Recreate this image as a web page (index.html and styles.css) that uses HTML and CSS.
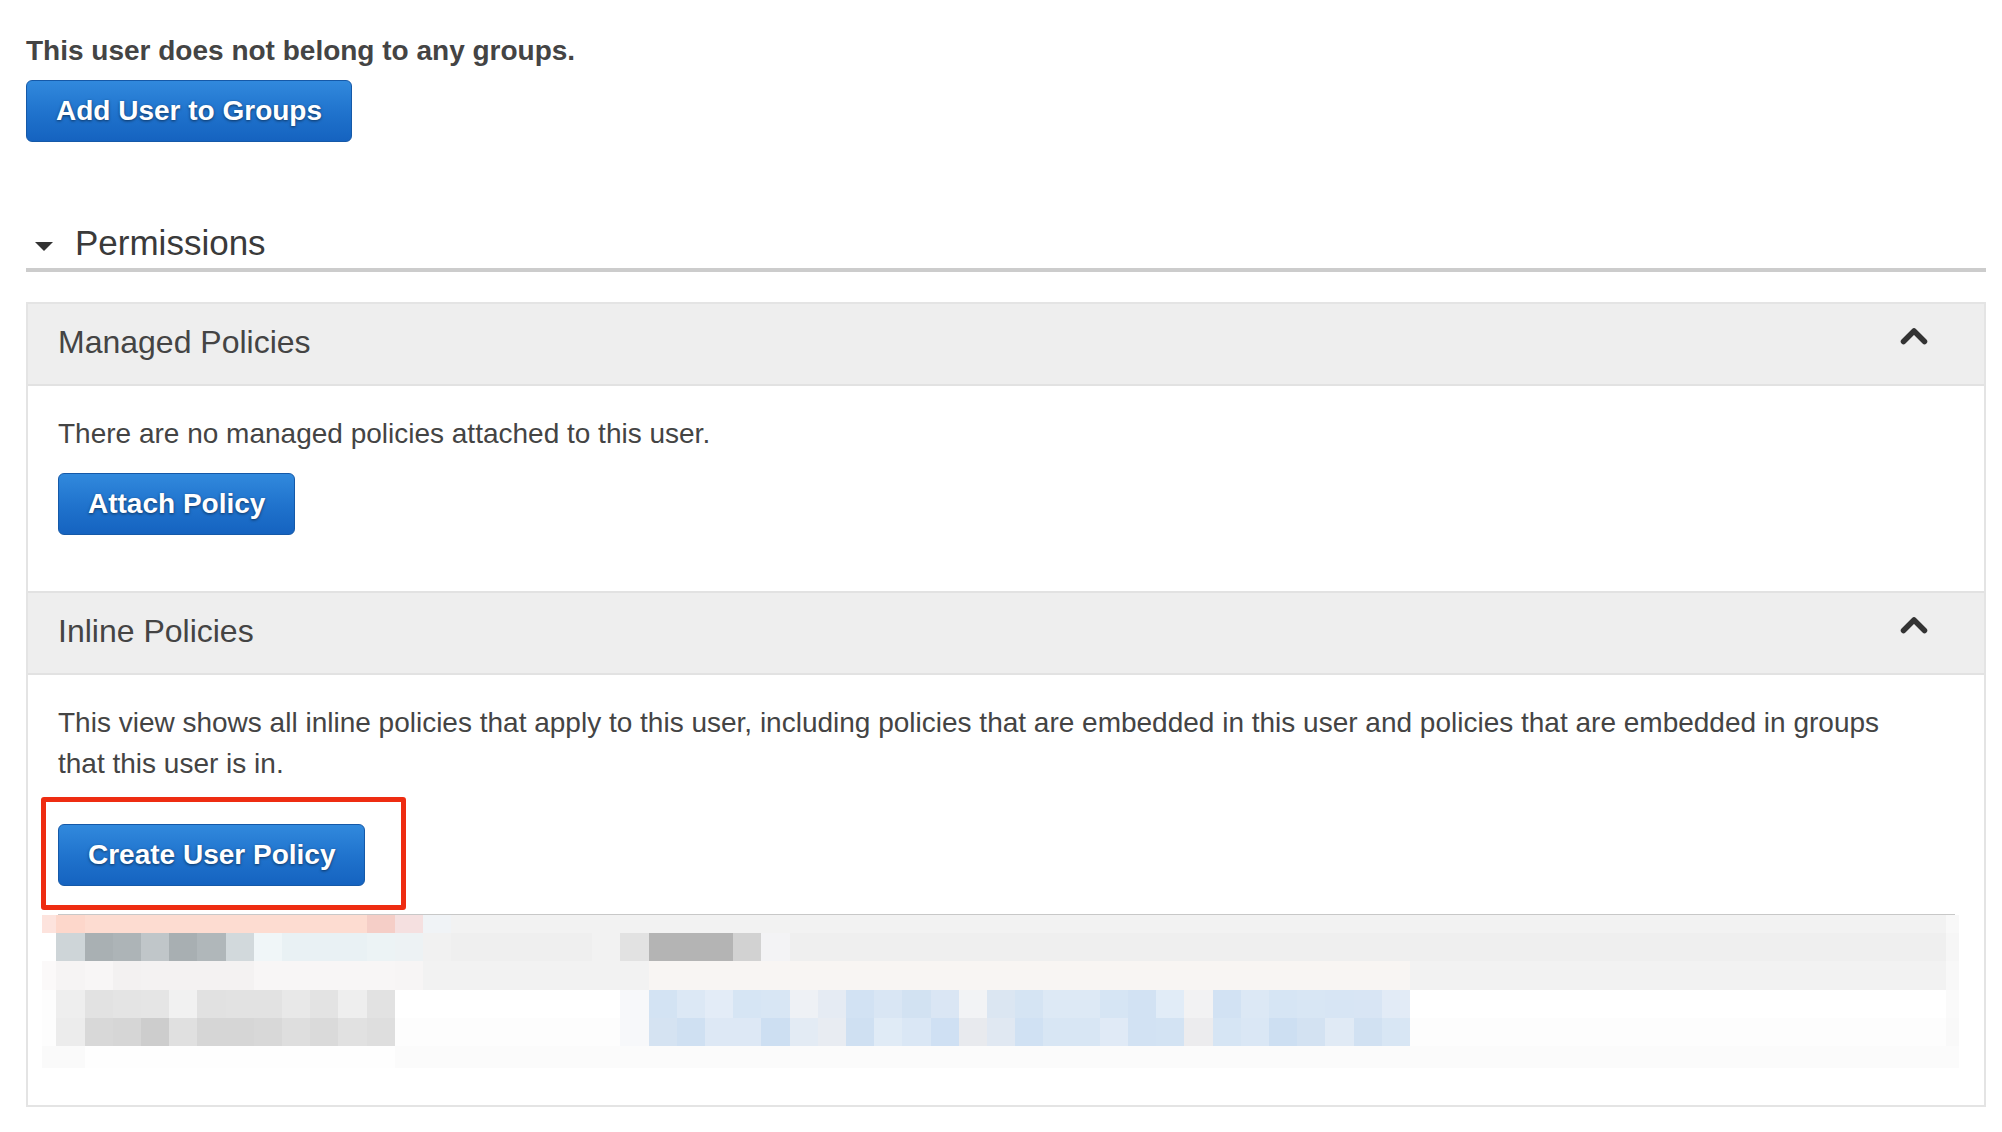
FILE: index.html
```html
<!DOCTYPE html>
<html lang="en">
<head>
<meta charset="utf-8">
<title>User permissions</title>
<link rel="stylesheet" href="styles.css">
</head>
<body>
<div class="page">
  <p class="groups-msg">This user does not belong to any groups.</p>
  <button class="btn groups-btn" type="button">Add User to Groups</button>

  <div class="perm-head">
    <svg class="caret" width="18" height="9" viewBox="0 0 18 9"><path d="M0 0H18L9 9Z" fill="#333"/></svg>
    <h2 class="perm-title">Permissions</h2>
  </div>

  <div class="panel">
    <div class="sec-head">
      <h3 class="sec-title">Managed Policies</h3>
      <svg class="chevron" width="28" height="18" viewBox="0 0 28 18"><polyline points="3.5,14.5 14,4 24.5,14.5" fill="none" stroke="#333" stroke-width="5.5" stroke-linecap="round" stroke-linejoin="round"/></svg>
    </div>
    <div class="sec-body">
      <p>There are no managed policies attached to this user.</p>
      <button class="btn attach" type="button">Attach Policy</button>
    </div>

    <div class="sec-head">
      <h3 class="sec-title">Inline Policies</h3>
      <svg class="chevron" width="28" height="18" viewBox="0 0 28 18"><polyline points="3.5,14.5 14,4 24.5,14.5" fill="none" stroke="#333" stroke-width="5.5" stroke-linecap="round" stroke-linejoin="round"/></svg>
    </div>
    <div class="sec-body last">
      <p class="inline-desc">This view shows all inline policies that apply to this user, including policies that are embedded in this user and policies that are embedded in groups that this user is in.</p>
      <div class="highlight">
        <button class="btn" type="button">Create User Policy</button>
      </div>
      <div class="tbl">
        <div class="tbl-rule"></div>
        <div class="mrow r1"></div>
        <div class="mrow r2"></div>
        <div class="mrow r3"></div>
        <div class="mrow r4"></div>
        <div class="mrow r5"></div>
        <div class="mrow r6"></div>
      </div>
    </div>
  </div>
</div>
</body>
</html>
```
FILE: styles.css
```css
html, body {
  margin: 0;
  background: #fff;
}

body {
  font-family: "Liberation Sans", Arial, Helvetica, sans-serif;
  color: #444;
}

.page {
  padding: 30px 16px 0 26px;
}

.groups-msg {
  margin: 0;
  font-size: 28px;
  line-height: 41px;
  font-weight: bold;
  color: #444;
}

.btn {
  display: inline-flex;
  align-items: center;
  box-sizing: border-box;
  height: 62px;
  padding: 0 29px;
  margin: 0;
  border: 1px solid #1559a8;
  border-radius: 6px;
  background: linear-gradient(#3189dd, #1f72cc 55%, #1563c0);
  color: #fff;
  font-family: "Liberation Sans", Arial, sans-serif;
  font-size: 28px;
  font-weight: bold;
  line-height: 1;
  text-shadow: 0 1px 3px rgba(0, 0, 0, 0.55);
  cursor: pointer;
}

.groups-btn {
  margin-top: 9px;
}

.perm-head {
  display: flex;
  align-items: center;
  margin-top: 77px;
  padding: 0 0 1px 9px;
  border-bottom: 4px solid #ccc;
}

.caret {
  margin: 6px 22px 0 0;
  flex: none;
}

.perm-title {
  margin: 0;
  font-size: 35px;
  line-height: 48px;
  font-weight: normal;
  color: #3a3a3a;
}

.panel {
  margin-top: 30px;
  border: 2px solid #e4e4e4;
}

.sec-head {
  display: flex;
  justify-content: space-between;
  align-items: flex-start;
  padding: 16px 30px 20px;
  background: #eee;
  border-bottom: 2px solid #e2e2e2;
}

.sec-title {
  margin: 0;
  font-size: 32px;
  line-height: 44px;
  font-weight: normal;
  color: #444;
}

.chevron {
  flex: none;
  margin: 7px 26px 0 0;
}

.sec-body {
  padding: 27px 30px 56px;
  border-bottom: 2px solid #e2e2e2;
}

.sec-body.last {
  padding-bottom: 37px;
  border-bottom: none;
}

.sec-body p {
  margin: 0;
  font-size: 28px;
  line-height: 41px;
  color: #444;
}

.inline-desc {
  max-width: 1870px;
}

.attach {
  margin-top: 19px;
}

.highlight {
  display: flex;
  width: fit-content;
  margin: 13px 0 0 -17px;
  padding: 22px 36px 19px 12px;
  border: 5px solid #ee2c11;
  border-radius: 3px;
}

.tbl {
  margin: 4px -30px 0;
}

.tbl-rule {
  height: 1px;
  margin: 0 29px 0 30px;
  background: #c8c8c8;
}

.mrow {
  width: 1931px;
}

.r1 {
  height: 18.3px;
  background: linear-gradient(to right,
    transparent 0 13.7px,
    #fde3dd 13.7px 28.4px,
    #fdd7cb 28.4px 56.6px,
    #fddcd1 56.6px 338.6px,
    #f5cec7 338.6px 366.8px,
    #f5e0e0 366.8px 395px,
    #f0f3f6 395px 423.2px,
    #f2f2f2 423.2px 1917.8px,
    #f8f8f8 1917.8px 1931px);
}

.r2 {
  height: 28.2px;
  background: linear-gradient(to right,
    #fff 0 28.4px,
    #ced5d8 28.4px 56.6px,
    #a9b0b3 56.6px 84.8px,
    #adb4b7 84.8px 113px,
    #c0c6c9 113px 141.2px,
    #a8afb2 141.2px 169.4px,
    #b0b7ba 169.4px 197.6px,
    #d2d9dc 197.6px 225.8px,
    #f0f6f8 225.8px 254px,
    #e9f1f4 254px 338.6px,
    #ecf3f5 338.6px 366.8px,
    #edf2f4 366.8px 395px,
    #f1f1f1 395px 423.2px,
    #efefef 423.2px 564.2px,
    #f2f2f2 564.2px 592.4px,
    #e2e2e2 592.4px 620.6px,
    #b4b4b4 620.6px 705.2px,
    #d2d2d2 705.2px 733.4px,
    #f3f3f5 733.4px 761.6px,
    #efefef 761.6px 1917.8px,
    #f6f6f6 1917.8px 1931px);
}

.r3 {
  height: 28.2px;
  background: linear-gradient(to right,
    #fff 0 13.7px,
    #fbf9f9 13.7px 28.4px,
    #f6f4f4 28.4px 56.6px,
    #f8f6f6 56.6px 84.8px,
    #f3f1f1 84.8px 113px,
    #f4f2f2 113px 225.8px,
    #f8f6f6 225.8px 366.8px,
    #f7f5f5 366.8px 395px,
    #f2f2f2 395px 620.6px,
    #f8f5f3 620.6px 1382px,
    #f2f2f2 1382px 1917.8px,
    #f8f8f8 1917.8px 1931px);
}

.r4 {
  height: 28.2px;
  background: linear-gradient(to right,
    #fff 0 13.7px,
    #fdfdfd 13.7px 28.4px,
    #eeeeee 28.4px 56.6px,
    #e2e2e2 56.6px 84.8px,
    #e4e4e4 84.8px 113px,
    #e5e5e5 113px 141.2px,
    #f1f1f1 141.2px 169.4px,
    #e1e1e1 169.4px 197.6px,
    #e2e2e2 197.6px 254px,
    #e8e8e8 254px 282.2px,
    #e3e3e3 282.2px 310.4px,
    #eeeeee 310.4px 338.6px,
    #e2e2e2 338.6px 366.8px,
    #fff 366.8px 592.4px,
    #f7f8fa 592.4px 620.6px,
    #d3e3f3 620.6px 648.8px,
    #dce8f5 648.8px 677px,
    #e3ecf7 677px 705.2px,
    #d6e5f4 705.2px 733.4px,
    #d8e6f4 733.4px 761.6px,
    #eef1f5 761.6px 789.8px,
    #e5ebf3 789.8px 818px,
    #d2e2f3 818px 846.2px,
    #d9e6f4 846.2px 874.4px,
    #d2e2f2 874.4px 902.6px,
    #dae6f4 902.6px 930.8px,
    #f2f3f5 930.8px 959px,
    #dbe6f2 959px 987.2px,
    #d5e4f3 987.2px 1015.4px,
    #dde9f5 1015.4px 1071.8px,
    #d6e5f4 1071.8px 1100px,
    #d2e2f3 1100px 1128.2px,
    #e1ecf7 1128.2px 1156.4px,
    #f2f2f3 1156.4px 1184.6px,
    #d2e2f3 1184.6px 1212.8px,
    #dce8f5 1212.8px 1241px,
    #d6e5f4 1241px 1269.2px,
    #d8e6f4 1269.2px 1297.4px,
    #d7e5f4 1297.4px 1325.6px,
    #d8e5f4 1325.6px 1353.8px,
    #e2ebf6 1353.8px 1382px,
    #fff 1382px 1917.8px,
    #fafafa 1917.8px 1931px);
}

.r5 {
  height: 28.2px;
  background: linear-gradient(to right,
    #fff 0 13.7px,
    #fdfdfd 13.7px 28.4px,
    #ececec 28.4px 56.6px,
    #d8d8d8 56.6px 84.8px,
    #d6d6d6 84.8px 113px,
    #cdcdcd 113px 141.2px,
    #e0e0e0 141.2px 169.4px,
    #d6d6d6 169.4px 225.8px,
    #d8d8d8 225.8px 254px,
    #dedede 254px 282.2px,
    #dadada 282.2px 310.4px,
    #e1e1e1 310.4px 338.6px,
    #dedede 338.6px 366.8px,
    #fdfdfd 366.8px 592.4px,
    #f7f8fa 592.4px 620.6px,
    #d5e3f2 620.6px 648.8px,
    #cfe0f2 648.8px 677px,
    #dde8f5 677px 733.4px,
    #cddff2 733.4px 761.6px,
    #e3ebf4 761.6px 789.8px,
    #e8ecf2 789.8px 818px,
    #cfe0f2 818px 846.2px,
    #e0ebf6 846.2px 874.4px,
    #dae7f5 874.4px 902.6px,
    #cfe0f3 902.6px 930.8px,
    #e8eaee 930.8px 959px,
    #e0e8f2 959px 987.2px,
    #d0e1f3 987.2px 1015.4px,
    #d8e6f4 1015.4px 1071.8px,
    #e0eaf6 1071.8px 1100px,
    #d2e2f3 1100px 1128.2px,
    #d3e3f3 1128.2px 1156.4px,
    #ececee 1156.4px 1184.6px,
    #d6e5f4 1184.6px 1212.8px,
    #dae7f5 1212.8px 1241px,
    #cddff2 1241px 1269.2px,
    #d3e2f2 1269.2px 1297.4px,
    #e0eaf5 1297.4px 1325.6px,
    #d1e1f2 1325.6px 1353.8px,
    #d8e6f4 1353.8px 1382px,
    #fdfdfd 1382px 1917.8px,
    #f9f9f9 1917.8px 1931px);
}

.r6 {
  height: 22px;
  background: linear-gradient(to right,
    #fff 0 13.7px,
    #fafafa 13.7px 56.6px,
    #fefefe 56.6px 366.8px,
    #fbfbfb 366.8px 1931px);
}
```
